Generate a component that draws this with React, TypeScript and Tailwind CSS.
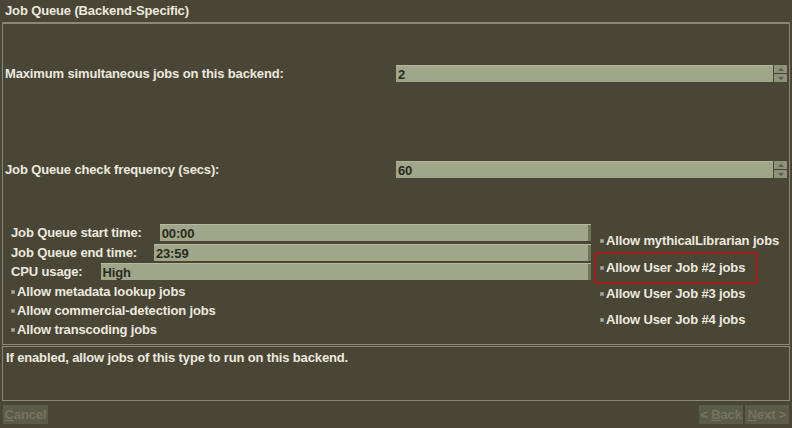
import React from 'react';

const Spin: React.FC = () => (
  <div className="flex flex-col w-[13px] h-[17px] ml-px gap-px">
    <div className="flex-1 bg-[#8d917a] flex items-center justify-center">
      <div className="w-0 h-0 border-x-[3px] border-x-transparent border-b-[3px] border-b-[#5a5d4a]" />
    </div>
    <div className="flex-1 bg-[#8d917a] flex items-center justify-center">
      <div className="w-0 h-0 border-x-[3px] border-x-transparent border-t-[3px] border-t-[#5a5d4a]" />
    </div>
  </div>
);

const Field: React.FC<{ value: string; grip?: boolean }> = ({ value, grip }) => (
  <div className="flex-1 h-[17px] bg-[#a0a68a] border-t border-[#b4b99e] flex items-center text-[#2a2b20] pl-[2px]">
    <span className="flex-1 leading-none">{value}</span>
    {grip && <div className="w-[3px] h-full bg-[#6e735e]" />}
  </div>
);

const Check: React.FC<{ label: string }> = ({ label }) => (
  <div className="flex items-center">
    <div className="w-[4px] h-[4px] bg-[#b2af9d] border border-[#8c8a78] mr-[2px]" />
    <span>{label}</span>
  </div>
);

export default function App() {
  return (
    <div className="w-[792px] h-[428px] bg-[#4a4636] font-['Liberation_Sans',Arial,sans-serif] font-bold text-[13px] tracking-[-0.14px] text-[#ece9df] flex flex-col overflow-hidden">
      <div className="h-[22px] pl-[5px] flex items-center">Job Queue (Backend-Specific)</div>

      <div className="mx-[2px] h-[323px] border border-t-2 border-[#8b8875] flex flex-col pt-[41px]">
        <div className="flex items-center h-[17px]">
          <div className="w-[393px] pl-[2px]">Maximum simultaneous jobs on this backend:</div>
          <Field value="2" />
          <Spin />
          <div className="w-[2px]" />
        </div>

        <div className="flex items-center h-[17px] mt-[79px]">
          <div className="w-[393px] pl-[2px]">Job Queue check frequency (secs):</div>
          <Field value="60" />
          <Spin />
          <div className="w-[2px]" />
        </div>

        <div className="flex mt-[46px]">
          <div className="w-[588px] pl-[8px] flex flex-col">
            <div className="flex items-center h-[17px]">
              <span className="mr-[18px]">Job Queue start time:</span>
              <Field value="00:00" grip />
            </div>
            <div className="flex items-center h-[17px] mt-[3px]">
              <span className="mr-[17px]">Job Queue end time:</span>
              <Field value="23:59" grip />
            </div>
            <div className="flex items-center h-[17px] mt-[2px]">
              <span className="mr-[18px]">CPU usage:</span>
              <Field value="High" grip />
            </div>
            <div className="flex flex-col mt-[2px]">
              <div className="h-[19px] flex items-center"><Check label="Allow metadata lookup jobs" /></div>
              <div className="h-[19px] flex items-center"><Check label="Allow commercial-detection jobs" /></div>
              <div className="h-[19px] flex items-center"><Check label="Allow transcoding jobs" /></div>
            </div>
          </div>

          <div className="flex flex-col pl-[3px] pt-[5px]">
            <div className="h-[23px] flex items-center pl-[6px]"><Check label="Allow mythicalLibrarian jobs" /></div>
            <div className="h-[32px] w-[164px] flex items-center pl-[4px] border-2 border-[#a11c1c]"><Check label="Allow User Job #2 jobs" /></div>
            <div className="h-[20px] flex items-center pl-[6px]"><Check label="Allow User Job #3 jobs" /></div>
            <div className="h-[32px] flex items-center pl-[6px]"><Check label="Allow User Job #4 jobs" /></div>
          </div>
        </div>
      </div>

      <div className="mx-[2px] mt-px h-[55px] border border-[#8b8875] pl-[3px] pt-px">
        If enabled, allow jobs of this type to run on this backend.
      </div>

      <div className="flex items-center justify-between mt-[4px] px-[3px]">
        <div className="w-[45px] h-[19px] bg-[#5b5c47] text-[#71755d] flex items-center justify-center">
          <span><span className="underline">C</span>ancel</span>
        </div>
        <div className="flex gap-[2px]">
          <div className="w-[44px] h-[19px] bg-[#5b5c47] text-[#71755d] flex items-center justify-center">
            <span>&lt; <span className="underline">B</span>ack</span>
          </div>
          <div className="w-[44px] h-[19px] bg-[#5b5c47] text-[#71755d] flex items-center justify-center">
            <span><span className="underline">N</span>ext &gt;</span>
          </div>
        </div>
      </div>
    </div>
  );
}
